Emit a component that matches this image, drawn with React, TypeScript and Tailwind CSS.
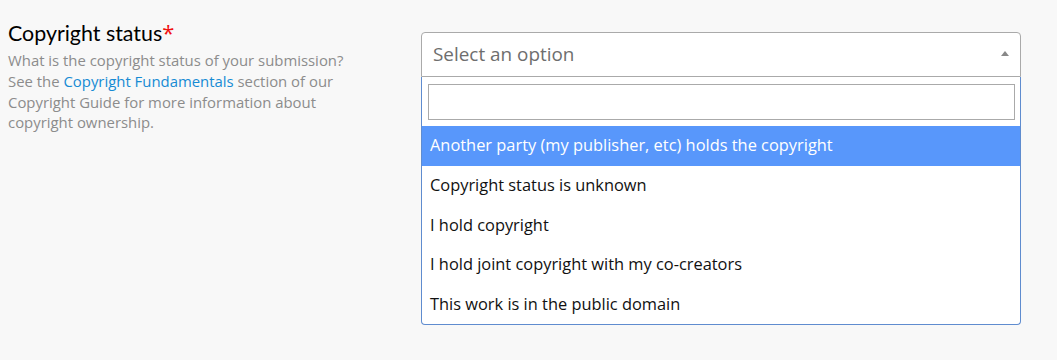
const options = [
  'Another party (my publisher, etc) holds the copyright',
  'Copyright status is unknown',
  'I hold copyright',
  'I hold joint copyright with my co-creators',
  'This work is in the public domain',
];

export default function App() {
  return (
    <div className="flex h-[360px] w-full bg-[#f8f8f8] pl-[8px] pt-[20px] font-['Open_Sans',sans-serif]">
      {/* Label + help text */}
      <div className="w-[352px]">
        <div className="font-['Lato',sans-serif] text-[21.4px] leading-[25px] text-black">
          Copyright status<span className="font-['Open_Sans',sans-serif] text-[22px] text-[#f01010]">*</span>
        </div>
        <p className="mt-[4px] text-[14.9px] leading-[20.8px] text-[#8c8c8c]">
          What is the copyright status of your submission? See the{' '}
          <a className="text-[#168bd4]">Copyright Fundamentals</a> section of our Copyright Guide for more
          information about copyright ownership.
        </p>
      </div>

      {/* Open select2-style dropdown */}
      <div className="ml-[61px] mt-[12px] w-[600px]">
        <div className="flex h-[45px] items-center justify-between rounded-t-[4px] border border-[#aaaaaa] bg-white pl-[11px] pr-[11px]">
          <span className="text-[18.9px] leading-[43px] text-[#6e6e6e]">Select an option</span>
          <span className="mb-[2px] h-0 w-0 border-x-[4px] border-b-[5px] border-x-transparent border-b-[#888888]" />
        </div>
        <div className="rounded-b-[4px] border-x border-b border-[#5f8ccf] bg-white">
          <div className="pb-[6px] pl-[6px] pr-[5px] pt-[7px]">
            <div className="h-[36px] w-full border border-[#aaaaaa] bg-white" />
          </div>
          {options.map((o, i) => (
            <div
              key={o}
              className={
                i === 0
                  ? 'flex h-[39.6px] items-center bg-[#5897fb] pl-[8px] text-[16.4px] text-white'
                  : 'flex h-[39.6px] items-center pl-[8px] text-[16.4px] text-[#111111]'
              }
            >
              {o}
            </div>
          ))}
        </div>
      </div>
    </div>
  );
}
